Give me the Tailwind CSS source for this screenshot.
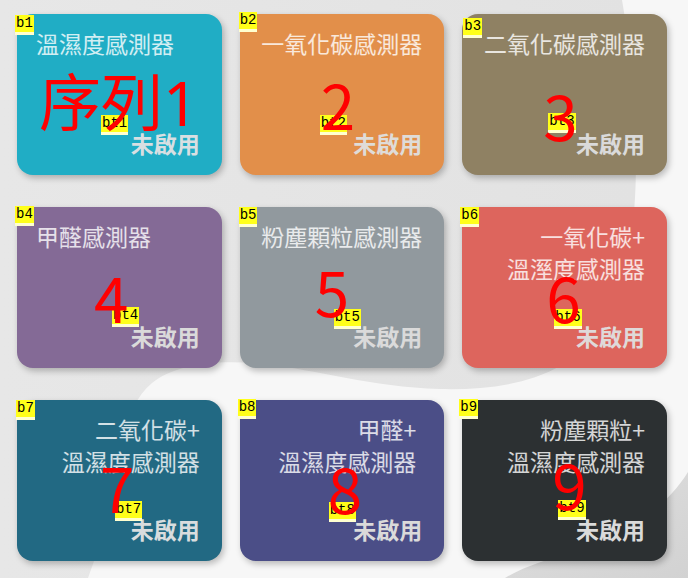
<!DOCTYPE html>
<html lang="zh-Hant">
<head>
<meta charset="utf-8">
<meta name="viewport" content="width=device-width, initial-scale=1">
<title>感測器</title>
<script src="https://cdn.jsdelivr.net/npm/@tailwindcss/browser@4"></script>
</head>
<body class="relative min-h-screen overflow-x-hidden bg-[#f7f7f7] font-['Noto_Sans_CJK_TC',sans-serif]">
<svg class="absolute inset-0 h-full w-full" viewBox="0 0 688 578" preserveAspectRatio="none" aria-hidden="true">
  <defs>
    <linearGradient id="g" x1="0" y1="0" x2="1" y2="0"><stop offset="0" stop-color="#e7e7e7"/><stop offset="1" stop-color="#e2e2e2"/></linearGradient>
    <linearGradient id="h" x1="0" y1="0" x2="1" y2="1"><stop offset="0" stop-color="#e0e0e0"/><stop offset="1" stop-color="#d2d2d2"/></linearGradient>
  </defs>
  <path fill="url(#g)" d="M0 0H622C630 45 635 110 636 160C636 260 618 330 560 366C525 386 480 390 440 389C370 387 320 370 262 364C215 359 175 365 152 383C115 415 125 470 98 550L88 578H0Z"/>
  <path fill="url(#h)" d="M505 578C550 550 640 548 688 472V578Z"/>
</svg>
<main class="relative grid grid-cols-3 gap-x-[18px] gap-y-8 pt-[14px] pr-[21px] pb-4 pl-[17px] text-[23px] leading-8">
  <button type="button" class="relative flex min-h-[161px] flex-col justify-between rounded-2xl bg-[#20adc5] pt-[13px] pr-[22px] pb-4 pl-[19px] shadow-[2px_3px_6px_#00000040]">
    <span class="self-start whitespace-nowrap text-white/80">溫濕度感測器</span>
    <span class="self-end font-bold text-[#d8dfe2]">未啟用</span>
    <span class="absolute top-[1px] left-[-2px] border-b-[3px] border-[#ffffd0] bg-[#ffff1a] px-px font-['Liberation_Mono',monospace] text-sm leading-[17px] text-black">b1</span>
    <span class="absolute top-[101px] left-[84px] border-b-[3px] border-[#ffffd0] bg-[#ffff1a] px-px font-['Liberation_Mono',monospace] text-sm leading-[17px] text-black">bt1</span>
    <span class="absolute top-[57px] left-[22px] whitespace-nowrap font-['Noto_Sans','Noto_Sans_CJK_TC',sans-serif] text-[62px] leading-none text-[#ff0000]">序列1</span>
  </button>
  <button type="button" class="relative flex min-h-[161px] flex-col justify-between rounded-2xl bg-[#e28f4a] pt-[13px] pr-[22px] pb-4 pl-[19px] shadow-[2px_3px_6px_#00000040]">
    <span class="self-end whitespace-nowrap text-white/80">一氧化碳感測器</span>
    <span class="self-end font-bold text-[#dfdcd8]">未啟用</span>
    <span class="absolute top-[-2px] left-[-1px] border-b-[3px] border-[#ffffd0] bg-[#ffff1a] px-px font-['Liberation_Mono',monospace] text-sm leading-[17px] text-black">b2</span>
    <span class="absolute top-[101px] left-[80px] border-b-[3px] border-[#ffffd0] bg-[#ffff1a] px-px font-['Liberation_Mono',monospace] text-sm leading-[17px] text-black">bt2</span>
    <span class="absolute top-[58px] left-[81px] text-[62px] leading-none text-[#ff0000]">2</span>
  </button>
  <button type="button" class="relative flex min-h-[161px] flex-col justify-between rounded-2xl bg-[#8f8163] pt-[13px] pr-[22px] pb-4 pl-[19px] shadow-[2px_3px_6px_#00000040]">
    <span class="self-end whitespace-nowrap text-white/80">二氧化碳感測器</span>
    <span class="self-end font-bold text-[#dadada]">未啟用</span>
    <span class="absolute top-[4px] left-[1px] border-b-[3px] border-[#ffffd0] bg-[#ffff1a] px-px font-['Liberation_Mono',monospace] text-sm leading-[17px] text-black">b3</span>
    <span class="absolute top-[99px] left-[86px] border-b-[3px] border-[#ffffd0] bg-[#ffff1a] px-px font-['Liberation_Mono',monospace] text-sm leading-[17px] text-black">bt3</span>
    <span class="absolute top-[69px] left-[81px] text-[62px] leading-none text-[#ff0000]">3</span>
  </button>
  <button type="button" class="relative flex min-h-[161px] flex-col justify-between rounded-2xl bg-[#846a96] pt-[13px] pr-[22px] pb-4 pl-[19px] shadow-[2px_3px_6px_#00000040]">
    <span class="self-start whitespace-nowrap text-white/80">甲醛感測器</span>
    <span class="self-end font-bold text-[#dadada]">未啟用</span>
    <span class="absolute top-[-1px] left-[-2px] border-b-[3px] border-[#ffffd0] bg-[#ffff1a] px-px font-['Liberation_Mono',monospace] text-sm leading-[17px] text-black">b4</span>
    <span class="absolute top-[100px] left-[95px] border-b-[3px] border-[#ffffd0] bg-[#ffff1a] px-px font-['Liberation_Mono',monospace] text-sm leading-[17px] text-black">bt4</span>
    <span class="absolute top-[58px] left-[77px] text-[62px] leading-none text-[#ff0000]">4</span>
  </button>
  <button type="button" class="relative flex min-h-[161px] flex-col justify-between rounded-2xl bg-[#91999e] pt-[13px] pr-[22px] pb-4 pl-[19px] shadow-[2px_3px_6px_#00000040]">
    <span class="self-end whitespace-nowrap text-white/80">粉塵顆粒感測器</span>
    <span class="self-end font-bold text-[#dadada]">未啟用</span>
    <span class="absolute top-0 left-[-1px] border-b-[3px] border-[#ffffd0] bg-[#ffff1a] px-px font-['Liberation_Mono',monospace] text-sm leading-[17px] text-black">b5</span>
    <span class="absolute top-[102px] left-[94px] border-b-[3px] border-[#ffffd0] bg-[#ffff1a] px-px font-['Liberation_Mono',monospace] text-sm leading-[17px] text-black">bt5</span>
    <span class="absolute top-[52px] left-[75px] text-[62px] leading-none text-[#ff0000]">5</span>
  </button>
  <button type="button" class="relative flex min-h-[161px] flex-col justify-between rounded-2xl bg-[#dd655d] pt-[13px] pr-[22px] pb-4 pl-[19px] shadow-[2px_3px_6px_#00000040]">
    <span class="self-end text-right whitespace-nowrap text-white/80">一氧化碳+<br>溫溼度感測器</span>
    <span class="self-end font-bold text-[#dfd9d9]">未啟用</span>
    <span class="absolute top-0 left-[-2px] border-b-[3px] border-[#ffffd0] bg-[#ffff1a] px-px font-['Liberation_Mono',monospace] text-sm leading-[17px] text-black">b6</span>
    <span class="absolute top-[102px] left-[92px] border-b-[3px] border-[#ffffd0] bg-[#ffff1a] px-px font-['Liberation_Mono',monospace] text-sm leading-[17px] text-black">bt6</span>
    <span class="absolute top-[58px] left-[84px] text-[62px] leading-none text-[#ff0000]">6</span>
  </button>
  <button type="button" class="relative flex min-h-[161px] flex-col justify-between rounded-2xl bg-[#226983] pt-[13px] pr-[22px] pb-4 pl-[19px] shadow-[2px_3px_6px_#00000040]">
    <span class="self-end text-right whitespace-nowrap text-white/80">二氧化碳+<br>溫濕度感測器</span>
    <span class="self-end font-bold text-[#d8dcde]">未啟用</span>
    <span class="absolute top-0 left-[-1px] border-b-[3px] border-[#ffffd0] bg-[#ffff1a] px-px font-['Liberation_Mono',monospace] text-sm leading-[17px] text-black">b7</span>
    <span class="absolute top-[101px] left-[98px] border-b-[3px] border-[#ffffd0] bg-[#ffff1a] px-px font-['Liberation_Mono',monospace] text-sm leading-[17px] text-black">bt7</span>
    <span class="absolute top-[55px] left-[83px] text-[62px] leading-none text-[#ff0000]">7</span>
  </button>
  <button type="button" class="relative flex min-h-[161px] flex-col justify-between rounded-2xl bg-[#4b4e87] pt-[13px] pr-[22px] pb-4 pl-[19px] shadow-[2px_3px_6px_#00000040]">
    <span class="self-end pr-[6px] text-right whitespace-nowrap text-white/80">甲醛+<br>溫濕度感測器</span>
    <span class="self-end font-bold text-[#dadada]">未啟用</span>
    <span class="absolute top-[-1px] left-[-2px] border-b-[3px] border-[#ffffd0] bg-[#ffff1a] px-px font-['Liberation_Mono',monospace] text-sm leading-[17px] text-black">b8</span>
    <span class="absolute top-[102px] left-[89px] border-b-[3px] border-[#ffffd0] bg-[#ffff1a] px-px font-['Liberation_Mono',monospace] text-sm leading-[17px] text-black">bt8</span>
    <span class="absolute top-[56px] left-[88px] text-[62px] leading-none text-[#ff0000]">8</span>
  </button>
  <button type="button" class="relative flex min-h-[161px] flex-col justify-between rounded-2xl bg-[#2c3032] pt-[13px] pr-[22px] pb-4 pl-[19px] shadow-[2px_3px_6px_#00000040]">
    <span class="self-end text-right whitespace-nowrap text-white/80">粉塵顆粒+<br>溫濕度感測器</span>
    <span class="self-end font-bold text-[#dadada]">未啟用</span>
    <span class="absolute top-[-1px] left-[-3px] border-b-[3px] border-[#ffffd0] bg-[#ffff1a] px-px font-['Liberation_Mono',monospace] text-sm leading-[17px] text-black">b9</span>
    <span class="absolute top-[100px] left-[96px] border-b-[3px] border-[#ffffd0] bg-[#ffff1a] px-px font-['Liberation_Mono',monospace] text-sm leading-[17px] text-black">bt9</span>
    <span class="absolute top-[52px] left-[90px] text-[62px] leading-none text-[#ff0000]">9</span>
  </button>
</main>
</body>
</html>
